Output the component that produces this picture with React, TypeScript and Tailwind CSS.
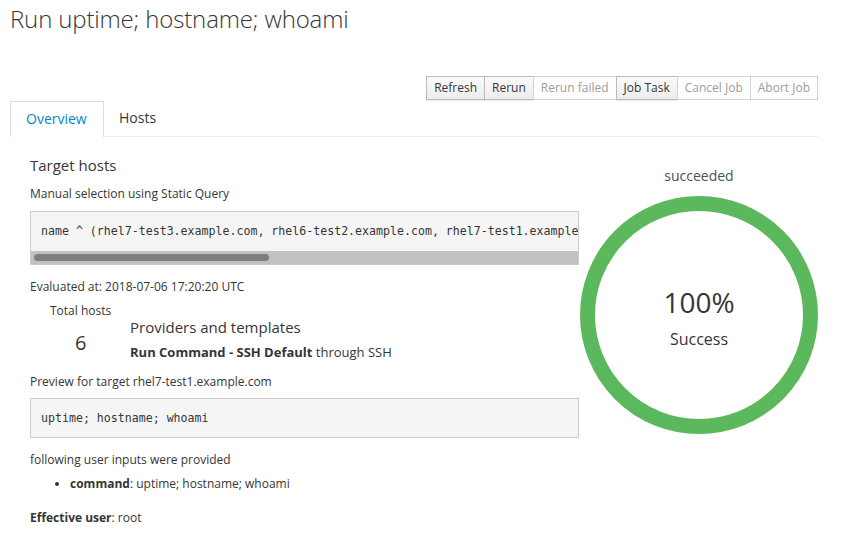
import React from "react";

const btnOn =
  "h-[24px] px-[7px] text-[12px] leading-[22px] text-[#363636] border border-[#bbb] bg-gradient-to-b from-[#fafafa] to-[#ededed] shadow-[0_1px_1px_rgba(3,3,3,0.08)] -ml-px first:ml-0";
const btnOff =
  "h-[24px] px-[7px] text-[12px] leading-[22px] text-[#9c9c9c] border border-[#d1d1d1] bg-white -ml-px";

export default function App() {
  return (
    <div
      className="w-[855px] h-[554px] bg-white text-[#363636] overflow-hidden"
      style={{ fontFamily: '"Open Sans", "Noto Sans", sans-serif' }}
    >
      <div className="pl-[10px] w-[818px]">
        <h1 className="h-[38px] text-[24px] font-light leading-[38px] text-[#363636] tracking-[-0.15px]">
          Run uptime; hostname; whoami
        </h1>
        <div className="flex justify-end mt-[38px]">
          <button className={btnOn}>Refresh</button>
          <button className={btnOn}>Rerun</button>
          <button className={btnOff}>Rerun failed</button>
          <button className={btnOn}>Job Task</button>
          <button className={btnOff}>Cancel Job</button>
          <button className={btnOff}>Abort Job</button>
        </div>
        <div className="flex mt-px border-b border-[#ededed] h-[36px]">
          <div className="w-[94px] h-[36px] border border-b-0 border-[#ddd] bg-white text-[#0088ce] text-[14px] leading-[34px] pl-[15px] -mb-px">
            Overview
          </div>
          <div className="text-[14px] leading-[34px] pl-[15px] text-[#363636]">Hosts</div>
        </div>
        <div className="flex">
          <div className="w-[569px] pl-[20px] text-[12px]">
            <div className="text-[15px] mt-[18px] leading-[20px]">Target hosts</div>
            <div className="mt-[10px] leading-[18px]">Manual selection using Static Query</div>
            <div className="mt-[8px] w-[549px] border border-[#ccc] bg-[#f5f5f5]">
              <div
                className="h-[39px] pl-[10px] text-[11.6px] leading-[39px] whitespace-nowrap overflow-hidden"
                style={{ fontFamily: '"DejaVu Sans Mono", monospace' }}
              >
                name ^ (rhel7-test3.example.com, rhel6-test2.example.com, rhel7-test1.example.com, rhel6-test4.example.com)
              </div>
              <div className="h-[13px] bg-[#c1c1c1] flex items-center pl-[3px]">
                <div className="h-[7px] w-[235px] rounded-full bg-[#7f7f7f]" />
              </div>
            </div>
            <div className="mt-[13px] leading-[18px]">Evaluated at: 2018-07-06 17:20:20 UTC</div>
            <div className="flex mt-[6px]">
              <div className="w-[100px] pl-[20px]">
                <div className="leading-[18px]">Total hosts</div>
                <div className="text-[20px] leading-[28px] mt-[9px] pl-[25px]">6</div>
              </div>
              <div className="mt-[15px]">
                <div className="text-[15px] leading-[20px]">Providers and templates</div>
                <div className="mt-[5px] text-[13px] leading-[20px]">
                  <span className="font-bold">Run Command - SSH Default</span> through SSH
                </div>
              </div>
            </div>
            <div className="mt-[11px] leading-[18px]">Preview for target rhel7-test1.example.com</div>
            <div
              className="mt-[7px] w-[549px] h-[40px] border border-[#ccc] bg-[#f5f5f5] pl-[10px] text-[11.6px] leading-[38px]"
              style={{ fontFamily: '"DejaVu Sans Mono", monospace' }}
            >
              uptime; hostname; whoami
            </div>
            <div className="mt-[13px] leading-[18px]">following user inputs were provided</div>
            <ul className="mt-[6px] pl-[40px] list-disc leading-[18px]">
              <li>
                <span className="font-bold">command</span>: uptime; hostname; whoami
              </li>
            </ul>
            <div className="mt-[16px] leading-[18px]">
              <span className="font-bold">Effective user</span>: root
            </div>
          </div>
          <div className="flex-1 flex flex-col items-center">
            <div className="mt-[29px] text-[14px] leading-[20px] text-[#4d5258]">succeeded</div>
            <div className="relative mt-[9px] w-[240px] h-[240px]">
              <svg width="240" height="240" viewBox="0 0 240 240">
                <circle cx="120" cy="120" r="111.5" fill="none" stroke="#5cb85c" strokeWidth="15" />
              </svg>
              <div className="absolute inset-0 flex flex-col items-center pt-[90px]">
                <div className="text-[28px] leading-[34px] text-[#363636]">100%</div>
                <div className="text-[16px] leading-[22px] mt-[9px] text-[#363636]">Success</div>
              </div>
            </div>
          </div>
        </div>
      </div>
    </div>
  );
}
